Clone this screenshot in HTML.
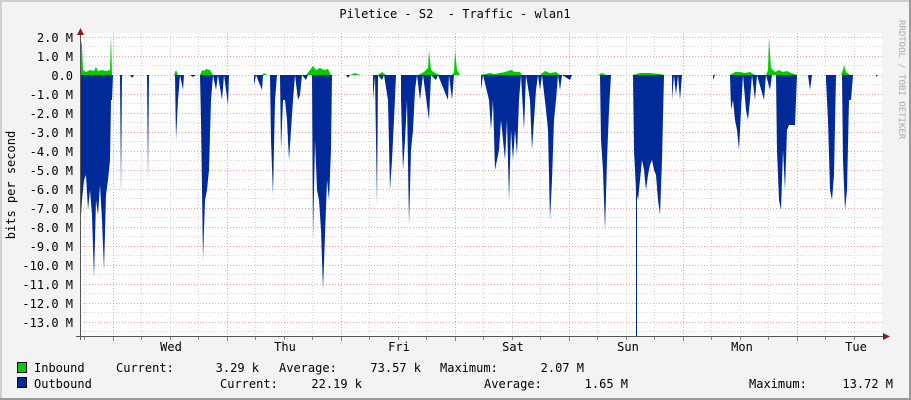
<!DOCTYPE html>
<html><head><meta charset="utf-8"><style>
html,body{margin:0;padding:0;width:911px;height:400px;overflow:hidden;background:#f3f3f3}
svg{display:block}
text{font-family:"DejaVu Sans Mono","Liberation Mono",monospace;font-size:12px;fill:#000}
</style></head><body>
<svg width="911" height="400" viewBox="0 0 911 400" xmlns="http://www.w3.org/2000/svg">
<rect x="0" y="0" width="911" height="400" fill="#f3f3f3"/>
<rect x="0" y="0" width="911" height="2" fill="#cfcfcf"/>
<rect x="0" y="0" width="2" height="400" fill="#cfcfcf"/>
<rect x="909" y="0" width="2" height="400" fill="#9a9a9a"/>
<rect x="0" y="398" width="911" height="2" fill="#9a9a9a"/>
<rect x="80" y="33" width="802" height="303" fill="#fff"/>
<g stroke="#d6d6d6" stroke-dasharray="1,2" stroke-width="1">
<path d="M80,46.5H882M80,65.5H882M80,84.5H882M80,103.5H882M80,122.5H882M80,141.5H882M80,160.5H882M80,179.5H882M80,198.5H882M80,217.5H882M80,236.5H882M80,255.5H882M80,274.5H882M80,293.5H882M80,312.5H882M80,331.5H882"/>
<path d="M84.5,33V336M141.5,33V336M170.5,33V336M198.5,33V336M255.5,33V336M284.5,33V336M312.5,33V336M369.5,33V336M398.5,33V336M426.5,33V336M483.5,33V336M512.5,33V336M540.5,33V336M597.5,33V336M626.5,33V336M654.5,33V336M711.5,33V336M740.5,33V336M768.5,33V336M825.5,33V336M854.5,33V336"/>
</g>
<g stroke="#f0a0a0" stroke-dasharray="1,2" stroke-width="1">
<path d="M80,37.5H882M80,56.5H882M80,75.5H882M80,94.5H882M80,113.5H882M80,132.5H882M80,151.5H882M80,170.5H882M80,189.5H882M80,208.5H882M80,227.5H882M80,246.5H882M80,265.5H882M80,284.5H882M80,303.5H882M80,322.5H882"/>
<path d="M113.5,33V336M227.5,33V336M341.5,33V336M455.5,33V336M569.5,33V336M683.5,33V336M797.5,33V336"/>
</g>
<path fill="#00cc00" d="M80,75 L80,37 82,45 83,70 86,72 90,70 94,71 96,67 98,71 102,70 106,71 110,70 111,35 112,75 Z M174,75 176,70 178,75 Z M200,75 202,70 204,71 206,69 210,70 213,75 Z M262,75 264,73 267,75 Z M306,75 310,70 313,66 316,70 320,68 324,70 328,69 331,75 Z M350,75 355,73 360,75 Z M378,75 382,72 386,75 Z M418,75 424,72 428,68 429,50 431,70 435,73 440,75 Z M452,75 454,72 455,50 457,70 460,75 Z M480,75 490,73 495,74 505,72 511,70 515,72 520,72 522,75 Z M540,75 545,71 550,73 556,72 560,75 Z M598,75 602,73 606,75 Z M633,75 640,73 650,73 660,74 664,75 Z M730,75 735,72 740,72 745,73 750,72 755,75 Z M766,75 768,70 769,38 771,68 775,72 779,70 783,72 787,71 791,73 797,75 Z M841,75 843,70 844,65 846,72 850,75 Z"/>
<path fill="#002a97" d="M80,75 L80,230 82,200 84,180 86,175 88,210 90,190 92,215 94,278 96,200 98,215 100,185 102,220 104,270 106,195 108,180 110,160 111,100 112,100 113,75
L120,75 121,195 122,75 L130,75 132,78 134,75 L147,75 148,180 149,75
L175,75 176,140 178,100 180,75 183,90 184,75 L190,75 193,77 196,75
L200,75 201,120 203,260 205,200 207,190 209,170 211,100 213,75 216,90 218,75 222,100 224,75 228,105 229,75
L254,75 254,85 256,75 262,90 263,75 L270,75 271,140 273,195 275,100 277,75 280,75 281,150 283,100 285,100 287,120 289,160 291,130 293,100 295,75 298,100 300,95 302,75 306,80 308,75
L312,75 313,240 315,140 317,190 319,200 321,230 323,290 325,235 327,180 329,200 331,150 332,75
L346,75 348,78 350,75 L373,75 373,100 375,75 377,205 378,75 382,80 384,75 388,100 390,190 392,160 394,120 396,75
L401,75 401,100 403,170 405,140 407,100 409,225 411,150 413,130 415,90 417,75 420,100 423,75 429,120 431,75 436,80 438,75 448,100 449,75 452,100 454,75
L481,75 481,90 483,75 489,100 491,130 493,100 495,170 497,160 499,150 501,120 503,140 505,160 507,120 509,200 511,130 513,160 515,130 517,155 519,100 521,75 524,130 526,75 530,100 532,150 534,120 536,90 538,75 540,90 542,75 546,110 548,130 550,220 552,180 554,120 556,100 558,75 560,90 562,75 570,80 572,75
L600,75 601,140 603,170 605,230 607,160 609,110 611,75
L633,75 634,150 636,190 638,200 640,180 642,160 644,170 646,190 648,175 650,165 652,160 654,170 656,175 658,200 660,215 662,160 664,75
L672,75 672,100 674,75 676,95 678,75 680,100 682,75
L713,75 713,80 715,75 L730,75 731,110 733,100 735,120 737,130 739,150 741,110 743,75 746,110 748,120 750,100 752,75 755,100 757,75 764,100 766,75 770,90 772,75
L776,75 777,150 779,200 781,210 783,150 785,190 787,130 789,125 791,125 793,125 795,125 797,75
L808,75 810,90 812,75 L826,75 826,80 828,120 830,190 832,200 834,175 836,75 L842,75 843,160 845,210 847,190 849,100 851,100 853,75 L876,75 876,77 878,75 Z"/>
<rect x="636" y="75" width="1" height="261" fill="#002a97"/>
<line x1="80.5" y1="30" x2="80.5" y2="340" stroke="#555"/>
<line x1="76" y1="336.5" x2="885" y2="336.5" stroke="#555"/>
<path d="M77,35 L80.5,28 L84,35Z" fill="#8b1a1a"/>
<path d="M883,333 L890,336.5 L883,340Z" fill="#8b1a1a"/>
<g stroke="#888"><path d="M84.5,337V340M141.5,337V340M170.5,337V340M198.5,337V340M255.5,337V340M284.5,337V340M312.5,337V340M369.5,337V340M398.5,337V340M426.5,337V340M483.5,337V340M512.5,337V340M540.5,337V340M597.5,337V340M626.5,337V340M654.5,337V340M711.5,337V340M740.5,337V340M768.5,337V340M825.5,337V340M854.5,337V340"/></g>
<g stroke="#e06060"><path d="M113.5,337V341M227.5,337V341M341.5,337V341M455.5,337V341M569.5,337V341M683.5,337V341M797.5,337V341"/></g>
<text x="455" y="18" text-anchor="middle" xml:space="preserve">Piletice - S2  - Traffic - wlan1</text>
<g text-anchor="end">
<text x="73" y="42">2.0 M</text><text x="73" y="61">1.0 M</text><text x="73" y="80">0.0</text>
<text x="73" y="99">-1.0 M</text><text x="73" y="118">-2.0 M</text><text x="73" y="137">-3.0 M</text>
<text x="73" y="156">-4.0 M</text><text x="73" y="175">-5.0 M</text><text x="73" y="194">-6.0 M</text>
<text x="73" y="213">-7.0 M</text><text x="73" y="232">-8.0 M</text><text x="73" y="251">-9.0 M</text>
<text x="73" y="270">-10.0 M</text><text x="73" y="289">-11.0 M</text><text x="73" y="308">-12.0 M</text>
<text x="73" y="327">-13.0 M</text>
</g>
<text x="0" y="0" transform="translate(15,185) rotate(-90)" text-anchor="middle">bits per second</text>
<text x="0" y="0" transform="translate(899,20) rotate(90)" style="font-size:9px;fill:#aaa">RRDTOOL / TOBI OETIKER</text>
<g text-anchor="middle">
<text x="171" y="351">Wed</text><text x="285" y="351">Thu</text><text x="399" y="351">Fri</text>
<text x="513" y="351">Sat</text><text x="628" y="351">Sun</text><text x="742" y="351">Mon</text><text x="856" y="351">Tue</text>
</g>
<rect x="17.5" y="362.5" width="9" height="10" fill="#00cc00" stroke="#000"/>
<rect x="17.5" y="377.5" width="9" height="10" fill="#002a97" stroke="#000"/>
<text x="34" y="372">Inbound</text><text x="116" y="372">Current:</text>
<text x="259" y="372" text-anchor="end">3.29 k</text><text x="279" y="372">Average:</text>
<text x="421" y="372" text-anchor="end">73.57 k</text><text x="440" y="372">Maximum:</text>
<text x="584" y="372" text-anchor="end">2.07 M</text>
<text x="34" y="388">Outbound</text><text x="220" y="388">Current:</text>
<text x="362" y="388" text-anchor="end">22.19 k</text><text x="484" y="388">Average:</text>
<text x="628" y="388" text-anchor="end">1.65 M</text><text x="749" y="388">Maximum:</text>
<text x="893" y="388" text-anchor="end">13.72 M</text>
</svg>
</body></html>
